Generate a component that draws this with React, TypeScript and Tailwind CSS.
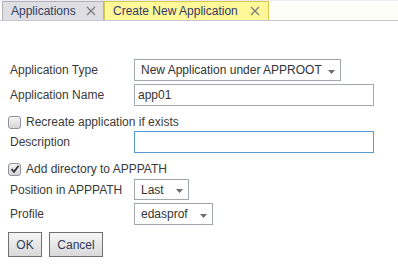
import React from "react";

const font = { fontFamily: '"Liberation Sans", Arial, sans-serif' };

function XIcon() {
  return (
    <svg width="10" height="10" viewBox="0 0 10 10" className="shrink-0">
      <path d="M1 1 L9 9 M9 1 L1 9" stroke="#7a7a7a" strokeWidth="1.2" fill="none" />
    </svg>
  );
}

function Arrow() {
  return (
    <svg width="7" height="4" viewBox="0 0 7 4" className="absolute right-[5px] bottom-[6px]">
      <polygon points="0,0 7,0 3.5,4" fill="#6b6b6b" />
    </svg>
  );
}

function Select({ value, w, h }: { value: string; w: string; h: string }) {
  return (
    <div className={`relative ${w} ${h} border border-[#a3a7b0] bg-white flex items-center pl-[6px] text-[12px] text-[#333]`}>
      {value}
      <Arrow />
    </div>
  );
}

function Checkbox({ checked }: { checked?: boolean }) {
  return (
    <div className="w-[13px] h-[13px] rounded-[3px] border border-[#8f9099] bg-gradient-to-b from-[#f3f3f3] to-[#d6d6d8] flex items-center justify-center shrink-0">
      {checked && (
        <svg width="10" height="10" viewBox="0 0 10 10">
          <path d="M1.5 5.2 L4 7.8 L8.6 1.8" stroke="#333" strokeWidth="1.8" fill="none" />
        </svg>
      )}
    </div>
  );
}

export default function App() {
  return (
    <div className="w-[398px] h-[270px] bg-white overflow-hidden" style={font}>
      <div className="h-[21px] bg-[#fbfdf6] border-t border-[#eee9f3] border-b border-b-[#c9c6d0] flex items-end pl-[2px]">
        <div className="w-[102px] h-[19px] bg-[#dedee3] border border-b-0 border-[#b3b3ba] flex items-center pl-[8px] pr-[7px] justify-between text-[12px] text-[#33405e]">
          <span>Applications</span>
          <XIcon />
        </div>
        <div className="w-[165px] h-[19px] bg-[#fff798] border border-b-0 border-[#d3ca4e] flex items-center pl-[8px] pr-[8px] justify-between text-[12px] text-[#343a66]">
          <span>Create New Application</span>
          <XIcon />
        </div>
      </div>

      <div className="pl-[8px] text-[12px] text-[#3a3a3a]">
        <div className="mt-[38px] h-[22px] flex items-center">
          <div className="w-[126px] pl-[2px]">Application Type</div>
          <Select value="New Application under APPROOT" w="w-[207px]" h="h-[22px]" />
        </div>
        <div className="mt-[3px] h-[22px] flex items-center">
          <div className="w-[126px] pl-[2px]">Application Name</div>
          <div className="w-[240px] h-[22px] border border-[#a3a7b0] bg-white flex items-center pl-[3px] text-[#333]">app01</div>
        </div>
        <div className="h-[25px] pt-[7px] flex items-center gap-[5px]">
          <Checkbox />
          <span>Recreate application if exists</span>
        </div>
        <div className="h-[22px] flex items-center">
          <div className="w-[126px] pl-[2px]">Description</div>
          <div className="w-[240px] h-[22px] border border-[#5b9bd3] bg-white"></div>
        </div>
        <div className="h-[26px] pt-[6px] flex items-center gap-[5px]">
          <Checkbox checked />
          <span>Add directory to APPPATH</span>
        </div>
        <div className="h-[21px] flex items-center">
          <div className="w-[126px] pl-[2px]">Position in APPPATH</div>
          <Select value="Last" w="w-[55px]" h="h-[21px]" />
        </div>
        <div className="mt-[3px] h-[22px] flex items-center">
          <div className="w-[126px] pl-[2px]">Profile</div>
          <Select value="edasprof" w="w-[79px]" h="h-[22px]" />
        </div>
        <div className="mt-[7px] flex gap-[7px]">
          <button className="w-[34px] h-[25px] border border-[#707070] bg-gradient-to-b from-[#f6f6f6] to-[#d9d9d9] text-[12px] text-[#2f3a5c]" style={font}>OK</button>
          <button className="w-[54px] h-[25px] border border-[#707070] bg-gradient-to-b from-[#f6f6f6] to-[#d9d9d9] text-[12px] text-[#2f3a5c]" style={font}>Cancel</button>
        </div>
      </div>
    </div>
  );
}
